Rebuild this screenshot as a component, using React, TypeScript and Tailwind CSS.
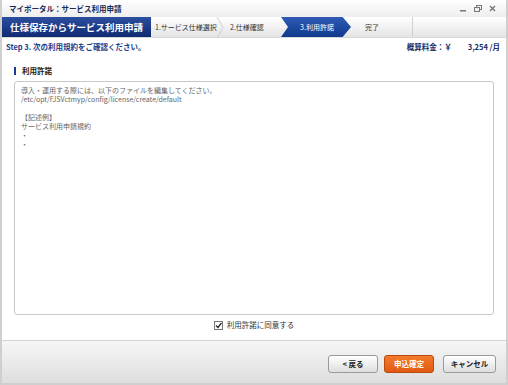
import React from 'react';

const Tab: React.FC<{ label: string; width: string }> = ({ label, width }) => (
  <div className={`relative flex items-center h-full shrink-0 ${width}`}>
    <span className="pl-[4px] text-[7px] whitespace-nowrap text-[#333]">{label}</span>
    <svg className="absolute right-0 top-0" width="9" height="21" viewBox="0 0 9 21">
      <polyline points="1,0 7,10.5 1,21" fill="none" stroke="#cfcfcf" strokeWidth="1" />
    </svg>
  </div>
);

export default function App() {
  return (
    <div className="w-[508px] h-[385px] bg-[#cfcfcf] px-[2px] pb-[2px] flex flex-col font-['Noto_Sans_CJK_JP',sans-serif]">
      {/* title bar */}
      <div className="h-[17px] flex items-center justify-between bg-gradient-to-b from-white to-[#eeeeee] pl-[7px] pr-[10px]">
        <span className="text-[7.5px] font-bold text-[#1c2a55] whitespace-nowrap">マイポータル：サービス利用申請</span>
        <div className="flex items-center gap-[7px]">
          <svg width="7" height="7" viewBox="0 0 7 7"><rect x="0" y="5" width="6" height="1.5" fill="#777" /></svg>
          <svg width="8" height="7" viewBox="0 0 8 7"><rect x="2.5" y="0.5" width="5" height="4" fill="none" stroke="#777" /><rect x="0.5" y="2.5" width="5" height="4" fill="#eee" stroke="#777" /></svg>
          <svg width="7" height="7" viewBox="0 0 7 7"><path d="M1 1 L6 6 M6 1 L1 6" stroke="#777" strokeWidth="1.4" /></svg>
        </div>
      </div>

      <div className="flex-1 flex flex-col bg-white">
        {/* header / steps */}
        <div className="h-[21px] flex bg-gradient-to-b from-white to-[#e4e4e4] border-b border-[#d8d8d8]">
          <div className="w-[149px] shrink-0 h-full flex items-center justify-center bg-gradient-to-b from-[#2d4fa0] to-[#0f2b72] text-white text-[9.5px] font-bold whitespace-nowrap">
            仕様保存からサービス利用申請
          </div>
          <Tab label="1.サービス仕様選択" width="w-[74px]" />
          <div className="flex items-center h-full w-[56px] shrink-0">
            <span className="pl-[5px] text-[7px] whitespace-nowrap text-[#333]">2.仕様確認</span>
          </div>
          <div className="h-full w-[70px] shrink-0 flex items-center justify-center bg-gradient-to-b from-[#2f5bb5] to-[#0f3a8e] [clip-path:polygon(0_0,88%_0,100%_50%,88%_100%,0_100%,10%_50%)]">
            <span className="text-[7px] text-white pl-[2px] whitespace-nowrap">3.利用許諾</span>
          </div>
          <div className="flex items-center h-full w-[62px] shrink-0 border-r border-[#d0d0d0]">
            <span className="pl-[14px] text-[7px] text-[#333]">完了</span>
          </div>
          <div className="flex-1" />
        </div>

        {/* step line */}
        <div className="h-[16px] mt-[1px] flex items-center justify-between pl-[4px] pr-[6px]">
          <span className="text-[7.5px] font-bold text-[#1a3c8c] whitespace-nowrap">Step 3. 次の利用規約をご確認ください。</span>
          <div className="flex items-center text-[7.5px] font-bold text-[#1a2e66] whitespace-nowrap">
            <span>概算料金：￥</span>
            <span className="ml-[16px]">3,254 /月</span>
          </div>
        </div>

        {/* section */}
        <div className="flex-1 flex flex-col px-[12px] pt-[11px]">
          <div className="flex items-center gap-[6px] h-[10px]">
            <div className="w-[2px] h-[8px] bg-[#1a3c8c]" />
            <span className="text-[7.5px] font-bold text-[#222]">利用許諾</span>
          </div>
          <div className="mt-[5px] h-[234px] border border-[#c8c8c8] rounded-[3px] px-[6px] pt-[4px] text-[7px] leading-[9px] text-[#666]">
            <div>導入・運用する際には、以下のファイルを編集してください。</div>
            <div>/etc/opt/FJSVctmyp/config/license/create/default</div>
            <div>&nbsp;</div>
            <div>【記述例】</div>
            <div>サービス利用申請規約</div>
            <div>・</div>
            <div>・</div>
          </div>
          <div className="flex items-center justify-center gap-[4px] mt-[5px] h-[10px]">
            <div className="w-[9px] h-[9px] border border-[#777] bg-white flex items-center justify-center">
              <svg width="7" height="7" viewBox="0 0 7 7"><path d="M1 3.5 L3 5.5 L6.5 0.8" fill="none" stroke="#222" strokeWidth="1.3" /></svg>
            </div>
            <span className="text-[7.5px] text-[#333]">利用許諾に同意する</span>
          </div>
        </div>

        {/* footer */}
        <div className="h-[43px] mt-[8px] flex items-center justify-end gap-[6px] pr-[10px] pt-[4px] bg-gradient-to-b from-[#f6f6f6] to-[#dedede] border-t border-[#d4d4d4]">
          <button className="w-[50px] h-[18px] rounded-[3px] border border-[#9a9a9a] bg-gradient-to-b from-white to-[#dedede] text-[7.5px] font-bold text-[#222]">
            &lt; 戻る
          </button>
          <button className="w-[50px] h-[18px] rounded-[3px] border border-[#b84a10] bg-gradient-to-b from-[#f57a2a] to-[#e05a10] text-[7.5px] font-bold text-white">
            申込確定
          </button>
          <button className="w-[53px] h-[18px] ml-[3px] rounded-[3px] border border-[#9a9a9a] bg-gradient-to-b from-white to-[#dedede] text-[7.5px] font-bold text-[#222]">
            キャンセル
          </button>
        </div>
      </div>
    </div>
  );
}
